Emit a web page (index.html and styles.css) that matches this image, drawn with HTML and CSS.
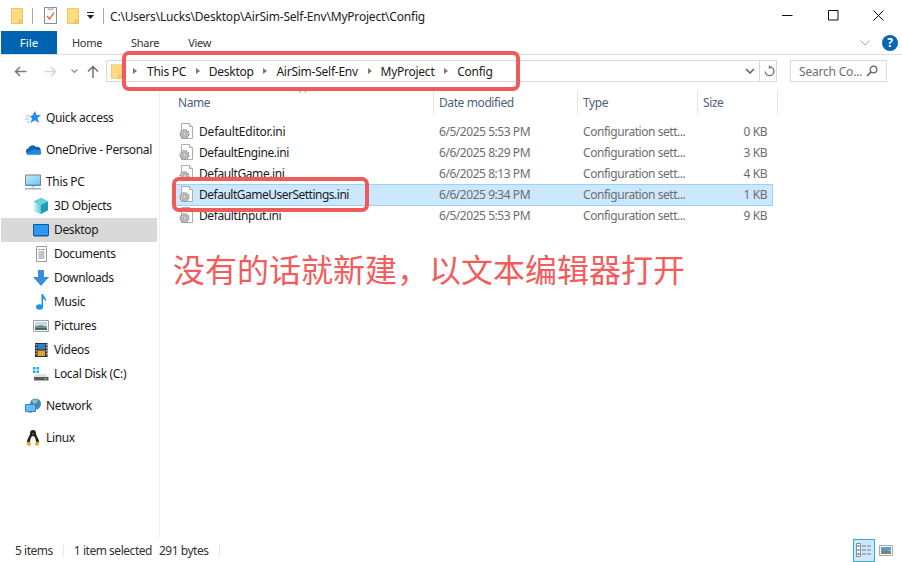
FILE: index.html
```html
<!DOCTYPE html>
<html lang="en">
<head>
<meta charset="utf-8">
<title>Config</title>
<link rel="stylesheet" href="styles.css">
</head>
<body>
<svg class="defs" width="0" height="0" aria-hidden="true">
  <defs>
    <linearGradient id="cube-left" x1="0" x2="1" y1="0" y2="0"><stop offset="0" stop-color="#d4f5f5"/><stop offset="1" stop-color="#58c8d6"/></linearGradient>
    <linearGradient id="screen" x1="0" x2="1" y1="0" y2="1"><stop offset="0" stop-color="#c4ecfb"/><stop offset="1" stop-color="#6cc4f2"/></linearGradient>
    <linearGradient id="sky" x1="0" x2="0" y1="0" y2="1"><stop offset="0" stop-color="#b5d6ee"/><stop offset="1" stop-color="#f0f6fa"/></linearGradient>
  </defs>
  <symbol id="folder" viewBox="0 0 12 16">
    <path d="M.5.5h11v15H.5z" fill="#ffdc80" stroke="#e8c565"/>
    <path d="M8 12h3.500v3.500H8z" fill="#f4cf6e" stroke="#e0b94f" stroke-width=".6"/>
  </symbol>
  <symbol id="ini" viewBox="0 0 16 18">
    <path d="M2.500.5h8l3 3v12h-11z" fill="#fff" stroke="#adadad"/>
    <path d="M10.500.5v3h3" fill="#f2f2f2" stroke="#adadad"/>
    <circle cx="5.500" cy="11" r="4.300" fill="#d4d4d4" stroke="#8e8e8e" stroke-width="1.300" stroke-dasharray="1.700 .9"/>
    <circle cx="5.500" cy="11" r="2.900" fill="#c8c8c8" stroke="#a0a0a0" stroke-width=".7"/>
    <circle cx="5.500" cy="11" r="1.200" fill="#f4f4f4" stroke="#8e8e8e" stroke-width=".6"/>
  </symbol>
</svg>

<div class="window">
  <header class="titlebar">
    <svg class="qa-folder" width="12" height="16"><use href="#folder"/></svg>
    <span class="qa-sep"></span>
    <svg class="qa-check" width="13" height="17" viewBox="0 0 13 17">
      <path d="M.5.5h12v16H.5z" fill="#fff" stroke="#8a8a8a"/>
      <path d="M3 9l2.500 3L10 5.500" fill="none" stroke="#e2552d" stroke-width="1.300"/>
      <path d="M4 .5h5v2H4z" fill="#ddd" stroke="#8a8a8a" stroke-width=".6"/>
    </svg>
    <svg class="qa-folder2" width="12" height="16"><use href="#folder"/></svg>
    <svg class="qa-drop" width="8" height="8" viewBox="0 0 8 8"><path d="M0 0h7v1H0zM0 3h7L3.500 7z" fill="#222"/></svg>
    <span class="qa-sep sep2"></span>
    <span class="title-text">C:\Users\Lucks\Desktop\AirSim-Self-Env\MyProject\Config</span>
    <div class="winbtns">
      <svg width="11" height="11" viewBox="0 0 11 11"><path d="M0 5.500h10.500" stroke="#111" fill="none"/></svg>
      <svg width="11" height="11" viewBox="0 0 11 11"><path d="M.5.500h9.500v9.500H.5z" stroke="#111" fill="none"/></svg>
      <svg width="11" height="11" viewBox="0 0 11 11"><path d="M.5.500l10 10M10.500.500l-10 10" stroke="#111" fill="none"/></svg>
    </div>
  </header>

  <nav class="tabs">
    <span class="tab-file">File</span>
    <span class="tab tab-home">Home</span>
    <span class="tab tab-share">Share</span>
    <span class="tab tab-view">View</span>
    <svg class="ribbon-chev" width="10" height="6" viewBox="0 0 10 6"><path d="M.5.500L5 5l4.500-4.500" fill="none" stroke="#a8a8a8"/></svg>
    <span class="help">?</span>
  </nav>

  <div class="addressrow">
    <svg class="nav-back" width="13" height="11" viewBox="0 0 13 11"><path d="M12.500 5.500H1.500M6 1L1.500 5.500 6 10" fill="none" stroke="#7a7a7a" stroke-width="1.500"/></svg>
    <svg class="nav-fwd" width="13" height="11" viewBox="0 0 13 11"><path d="M.5 5.500h11M7 1l4.500 4.500L7 10" fill="none" stroke="#d4d4d4" stroke-width="1.500"/></svg>
    <svg class="nav-down" width="7" height="5" viewBox="0 0 7 5"><path d="M.5.500l3 3 3-3" fill="none" stroke="#8a8a8a" stroke-width="1.100"/></svg>
    <svg class="nav-up" width="12" height="13" viewBox="0 0 12 13"><path d="M6 13V1.500M1 6.500l5-5 5 5" fill="none" stroke="#6f6f6f" stroke-width="1.500"/></svg>
    <div class="addressbox">
      <svg class="addr-folder" width="11" height="15" viewBox="0 0 12 16"><use href="#folder"/></svg>
      <span class="crumb-sep first"></span>
      <span class="crumb">This PC</span><span class="crumb-sep"></span>
      <span class="crumb">Desktop</span><span class="crumb-sep"></span>
      <span class="crumb">AirSim-Self-Env</span><span class="crumb-sep"></span>
      <span class="crumb">MyProject</span><span class="crumb-sep"></span>
      <span class="crumb">Config</span>
      <svg class="addr-chev" width="10" height="7" viewBox="0 0 10 7"><path d="M1 1l4 4 4-4" fill="none" stroke="#555" stroke-width="1.400"/></svg>
      <span class="addr-div"></span>
      <svg class="addr-refresh" width="11" height="12" viewBox="0 0 11 12"><path d="M5.500 2a4.300 4.300 0 1 1-4.200 4.500M5.500.5v3.200" fill="none" stroke="#777" stroke-width="1.400"/></svg>
    </div>
    <div class="searchbox">
      <span class="search-text">Search Co...</span>
      <svg width="12" height="12" viewBox="0 0 12 12"><circle cx="7.500" cy="4.500" r="3.300" fill="none" stroke="#666" stroke-width="1.300"/><path d="M5 7l-4 4" stroke="#666" stroke-width="1.700"/></svg>
    </div>
  </div>

  <main class="main">
    <aside class="sidebar">
      <section class="navgroup">
        <div class="navitem">
          <svg width="16" height="16" viewBox="0 0 16 16"><path d="M10 1l1.500 4H16l-3.500 3 1.500 5-4-2.800L5.500 13 7 8.500 5 6.500l2.500-1.200z" fill="#2a8be4"/><path d="M1 6h4M0 9h4.500M2 12h3" stroke="#8fc2ee"/></svg>
          <span>Quick access</span>
        </div>
      </section>
      <section class="navgroup">
        <div class="navitem">
          <svg width="16" height="16" viewBox="0 0 16 16"><path d="M3.500 12.500a3.200 3.200 0 0 1-.2-6.200A4.500 4.500 0 0 1 11 5a3.600 3.600 0 0 1 4.800 3.800L8 9z" fill="#0d62b4"/><path d="M2 12.800h11.500a2.300 2.300 0 0 0 2.300-3.800L9 7 4 9.500l-1 .5z" fill="#1f88dd"/></svg>
          <span>OneDrive - Personal</span>
        </div>
      </section>
      <section class="navgroup">
        <div class="navitem">
          <svg width="16" height="16" viewBox="0 0 16 16"><path d="M.5 1h15v10.500H.5z" fill="url(#screen)" stroke="#7f8488"/><path d="M1 10.500h14v1H1z" fill="#2f9fe4"/><path d="M6.500 12h3v1.500h-3z" fill="#bcc0c4"/><path d="M0 14h16v1.500H0z" fill="#a9adb1"/></svg>
          <span>This PC</span>
        </div>
        <div class="navitem sub">
          <svg width="16" height="16" viewBox="0 0 16 16"><path d="M8 0l7 3.500v9L8 16l-7-3.500v-9z" fill="#1f9cb8"/><path d="M1 3.500L8 7v9l-7-3.500z" fill="url(#cube-left)"/><path d="M8 0l7 3.500L8 7 1 3.500z" fill="#66cfdc"/></svg>
          <span>3D Objects</span>
        </div>
        <div class="navitem sub selected">
          <svg width="16" height="13" viewBox="0 0 16 13"><path d="M.5.500h15v11H.5z" fill="#2b9af0" stroke="#14589c"/><path d="M1 11h14v1.500H1z" fill="#14589c"/></svg>
          <span>Desktop</span>
        </div>
        <div class="navitem sub">
          <svg width="16" height="16" viewBox="0 0 16 16"><path d="M3.500.500h10v15h-10z" fill="#fff" stroke="#9a9a9a"/><path d="M5.500 3.500h2M5.500 6h6M5.500 8h6M5.500 10h6M5.500 12h6" stroke="#7d8a9a"/><path d="M8.500 3.500h3" stroke="#3a8ad0"/></svg>
          <span>Documents</span>
        </div>
        <div class="navitem sub">
          <svg width="16" height="16" viewBox="0 0 16 16"><path d="M5 0h6v7h5l-8 9-8-9h5z" fill="#3a8fdc"/></svg>
          <span>Downloads</span>
        </div>
        <div class="navitem sub">
          <svg width="16" height="16" viewBox="0 0 16 16"><ellipse cx="6.500" cy="13" rx="3.500" ry="2.800" fill="#1a97ee"/><path d="M8.500 13V0h1.700c.5 3 3.800 4 2.800 8-.4-2-1.700-2.800-3-3v8z" fill="#1a97ee"/></svg>
          <span>Music</span>
        </div>
        <div class="navitem sub">
          <svg width="16" height="12" viewBox="0 0 16 12"><path d="M.5.500h15v11H.5z" fill="#fff" stroke="#a0a0a0"/><path d="M2 2h12v8H2z" fill="url(#sky)"/><path d="M2 6l6-1 6 1.500V10H2z" fill="#6f9480"/><path d="M2 8h12v2H2z" fill="#4a6a58"/></svg>
          <span>Pictures</span>
        </div>
        <div class="navitem sub">
          <svg width="16" height="16" viewBox="0 0 16 16"><path d="M2 1h12.500v14H2z" fill="#2b2f33"/><path d="M4.500 2h7.500v5.500H4.500z" fill="#2e7fc8"/><path d="M4.500 8.500H12V14H4.500z" fill="#e2a32b"/><path d="M2.700 2h1v1.500h-1zM2.700 5h1v1.500h-1zM2.700 8h1v1.500h-1zM2.700 11h1v1.500h-1zM12.800 2h1v1.500h-1zM12.800 5h1v1.500h-1zM12.800 8h1v1.500h-1zM12.800 11h1v1.500h-1z" fill="#ddd"/></svg>
          <span>Videos</span>
        </div>
        <div class="navitem sub">
          <svg width="16" height="14" viewBox="0 0 16 14"><path d="M0 0h2.500v2.500H0zM3.500 0H6v2.500H3.500zM0 3.500h2.500V6H0zM3.500 3.500H6V6H3.500z" fill="#19b0f0"/><path d="M3 7h10l2 3H1z" fill="#e0e0e0"/><path d="M1 10h14.500v3.500H1z" fill="#5a5a5a"/><path d="M11.500 11h2v1.500h-2z" fill="#4fd04f"/></svg>
          <span>Local Disk (C:)</span>
        </div>
      </section>
      <section class="navgroup">
        <div class="navitem">
          <svg width="16" height="16" viewBox="0 0 16 16"><circle cx="10.500" cy="6" r="5.500" fill="#3e88c6"/><path d="M7 2.500l4-1.500 2 2.500-4 3z" fill="#8fc6a5"/><path d="M.5 6.500h10v7H.5z" fill="#62bdf0" stroke="#3a86c4"/><path d="M4 14h3v1H3z" fill="#9aa5ad"/></svg>
          <span>Network</span>
        </div>
      </section>
      <section class="navgroup">
        <div class="navitem">
          <svg width="16" height="16" viewBox="0 0 16 16"><path d="M8 0c2.300 0 3 1.800 3 3.500 0 2.500 3 5 3 8.500l-2 2H4l-2-2c0-3.500 3-6 3-8.500C5 1.800 5.700 0 8 0z" fill="#1f1f1f"/><path d="M8 6c1.800 0 3 3.500 3 6s-1.500 2.500-3 2.500-3 0-3-2.500 1.200-6 3-6z" fill="#f6f6f6"/><path d="M1.500 12.500l3-1 1.500 3.500L3 16zM14.500 12.500l-3-1-1.500 3.500 3 1zM7 3.500h2L8 5z" fill="#e6a81e"/></svg>
          <span>Linux</span>
        </div>
      </section>
    </aside>

    <section class="content">
      <div class="colheads">
        <span class="colhead head-name">Name<svg class="sort" width="8" height="4" viewBox="0 0 8 4"><path d="M.5 3.500L4 .5l3.500 3" fill="none" stroke="#999"/></svg></span>
        <span class="colhead head-date">Date modified</span>
        <span class="colhead head-type">Type</span>
        <span class="colhead head-size">Size</span>
      </div>
      <div class="filelist">
        <div class="filerow">
          <svg class="fileicon" width="16" height="18"><use href="#ini"/></svg>
          <span class="fname loose">DefaultEditor.ini</span><span class="fmeta">6/5/2025 5:53 PM</span><span class="fmeta">Configuration sett...</span><span class="fmeta fsize">0 KB</span>
        </div>
        <div class="filerow">
          <svg class="fileicon" width="16" height="18"><use href="#ini"/></svg>
          <span class="fname">DefaultEngine.ini</span><span class="fmeta">6/6/2025 8:29 PM</span><span class="fmeta">Configuration sett...</span><span class="fmeta fsize">3 KB</span>
        </div>
        <div class="filerow">
          <svg class="fileicon" width="16" height="18"><use href="#ini"/></svg>
          <span class="fname">DefaultGame.ini</span><span class="fmeta">6/6/2025 8:13 PM</span><span class="fmeta">Configuration sett...</span><span class="fmeta fsize">4 KB</span>
        </div>
        <div class="filerow active">
          <svg class="fileicon" width="16" height="18"><use href="#ini"/></svg>
          <span class="fname tight">DefaultGameUserSettings.ini</span><span class="fmeta">6/6/2025 9:34 PM</span><span class="fmeta">Configuration sett...</span><span class="fmeta fsize">1 KB</span>
        </div>
        <div class="filerow">
          <svg class="fileicon" width="16" height="18"><use href="#ini"/></svg>
          <span class="fname">DefaultInput.ini</span><span class="fmeta">6/5/2025 5:53 PM</span><span class="fmeta">Configuration sett...</span><span class="fmeta fsize">9 KB</span>
        </div>
      </div>
    </section>
  </main>

  <footer class="statusbar">
    <span class="st-items">5 items</span>
    <span class="st-sep"></span>
    <span class="st-sel">1 item selected</span>
    <span class="st-bytes">291 bytes</span>
    <span class="st-sep"></span>
    <div class="viewbtns">
      <span class="viewbtn on">
        <svg width="16" height="14" viewBox="0 0 16 14"><path d="M.5.500h4v13h-4z" fill="#fff" stroke="#8a8a8a"/><path d="M1.500 2h2v2h-2zM1.500 6h2v2h-2z" fill="#7a94b0"/><path d="M1.500 10h2v2h-2z" fill="#b06a5a"/><path d="M6 3h4M11 3h4M6 7h4M11 7h4M6 11h4M11 11h4" stroke="#777" stroke-width="1.100"/></svg>
      </span>
      <svg class="view-thumb" width="14" height="11" viewBox="0 0 14 11"><path d="M.5.500h13v10H.5z" fill="#fff" stroke="#a8a8a8"/><path d="M2 2h10v3.500H2z" fill="#5a9ad0"/><path d="M2 5.500l4-1 6 1.500v3H2z" fill="#6f8a78"/></svg>
    </div>
  </footer>
</div>

<div class="mark mark-address"></div>
<div class="mark mark-file"></div>
<p class="note">没有的话就新建，以文本编辑器打开</p>
</body>
</html>
```

FILE: styles.css
```css
* { box-sizing: border-box; }
html, body { margin: 0; padding: 0; }
body {
  width: 902px;
  height: 562px;
  overflow: hidden;
  background: #fff;
  position: relative;
  font-family: "Noto Sans", "Open Sans", "Liberation Sans", sans-serif;
  font-size: 12px;
  color: #1a1a1a;
}
.defs { position: absolute; }
svg { display: block; flex: none; }

.window { display: flex; flex-direction: column; height: 562px; }

/* title bar */
.titlebar { height: 31px; display: flex; align-items: center; padding-left: 11px; flex: none; }
.qa-sep { width: 1px; height: 16px; background: #a9a9a9; margin-left: 9px; }
.sep2 { margin-left: 8px; }
.qa-check { margin-left: 11px; }
.qa-folder2 { margin-left: 10px; }
.qa-drop { margin-left: 8px; }
.title-text { margin-left: 6px; padding-top: 1px; letter-spacing: -.2px; color: #222; }
.winbtns { margin-left: auto; display: flex; gap: 34.500px; padding-right: 18px; }

/* tabs */
.tabs { height: 24px; display: flex; align-items: center; border-bottom: 1px solid #dadbdc; padding-left: 1px; flex: none; }
.tab-file { width: 56px; height: 23px; background: #0063b1; color: #fff; text-align: center; line-height: 23px; font-size: 11.500px; }
.tab { font-size: 11px; color: #333; letter-spacing: -.3px; }
.tab-home { margin-left: 15px; }
.tab-share { margin-left: 29px; }
.tab-view { margin-left: 29px; }
.ribbon-chev { margin-left: auto; }
.help { width: 16px; height: 16px; border-radius: 50%; background: #0a64b8; color: #fff; font-weight: 700; font-size: 12px; line-height: 16px; text-align: center; margin: 0 4px 0 12px; }

/* address row */
.addressrow { height: 32px; display: flex; align-items: center; padding-left: 14px; flex: none; }
.nav-fwd { margin-left: 17px; }
.nav-down { margin-left: 14px; }
.nav-up { margin-left: 9px; }
.addressbox { margin-left: 7px; width: 671px; height: 22px; border: 1px solid #d9d9d9; display: flex; align-items: center; padding-left: 4px; }
.crumb { color: #1a1a1a; letter-spacing: -.25px; padding-top: 1px; }
.crumb-sep { width: 0; height: 0; border-left: 4px solid #777; border-top: 3px solid transparent; border-bottom: 3px solid transparent; margin: 0 9px 0 9.700px; }
.crumb-sep.first { margin-left: 11px; margin-right: 10px; }
.addr-chev { margin-left: auto; margin-right: 2px; }
.addr-div { width: 1px; height: 20px; background: #d9d9d9; margin-left: 2px; }
.addr-refresh { margin: 0 1px 0 4px; }
.searchbox { margin-left: 13px; width: 97px; height: 22px; border: 1px solid #d9d9d9; display: flex; align-items: center; justify-content: space-between; padding: 0 8px; color: #6d6d6d; letter-spacing: -.2px; }

/* main */
.main { flex: 1; display: flex; min-height: 0; }
.sidebar { width: 160px; flex: none; border-right: 1px solid #f0f0f0; padding: 19px 2px 0 1px; }
.navgroup { margin-bottom: 8px; }
.navitem { height: 24px; display: flex; align-items: center; padding-left: 24px; gap: 5px; letter-spacing: -.35px; color: #1a1a1a; }
.navitem span { margin-bottom: 2px; }
.navitem.sub { padding-left: 32px; }
.navitem.selected { background: #d9d9d9; }

.content { flex: 1; padding-top: 3px; min-width: 0; }
.colheads { display: grid; grid-template-columns: 274px 144px 120px 80px; height: 25px; }
.colhead { position: relative; border-right: 1px solid #e5e5e5; padding-left: 5px; line-height: 25px; color: #4c607a; letter-spacing: -.4px; }
.head-name { padding-left: 18px; }
.sort { position: absolute; left: 139px; top: -1px; }

.filelist { margin: 6px 0 0 15px; width: 598px; }
.filerow { height: 22px; margin-bottom: -1px; border: 1px solid transparent; display: grid; grid-template-columns: 23px 240px 144px 113px 71px; align-items: center; }
.filerow.active { background: #cce8ff; border-color: #99d1ff; }
.fileicon { margin-left: 3px; }
.fname { color: #1a1a1a; letter-spacing: -.4px; white-space: nowrap; margin-bottom: 2px; }
.fname.loose { letter-spacing: -.2px; }
.fname.tight { letter-spacing: -.5px; }
.fmeta { color: #6d6d6d; letter-spacing: -.45px; white-space: nowrap; margin-bottom: 2px; }
.fsize { text-align: right; }

/* status */
.statusbar { height: 24px; display: flex; align-items: center; padding-left: 15px; flex: none; letter-spacing: -.47px; color: #333; }
.st-sep { width: 1px; height: 13px; background: #e8e8e8; margin-left: 10px; }
.st-sel { margin-left: 10px; }
.st-bytes { margin-left: 7px; }
.viewbtns { margin-left: auto; display: flex; align-items: center; gap: 4px; padding-right: 9px; }
.viewbtn { width: 22px; height: 23px; background: #cce8ff; border: 1px solid #3aa6e0; display: flex; align-items: center; justify-content: center; }

/* red annotations laid over the window */
.mark { position: absolute; border: 4px solid #ef5a5a; border-radius: 7px; }
.mark-address { left: 122px; top: 51px; width: 398px; height: 40px; }
.mark-file { left: 172px; top: 177px; width: 197px; height: 35px; }
.note { position: absolute; left: 173px; top: 247px; margin: 0; font-family: "Noto Sans CJK SC", sans-serif; font-size: 32px; line-height: 42px; font-weight: 400; color: #f25c5c; white-space: nowrap; }
```
